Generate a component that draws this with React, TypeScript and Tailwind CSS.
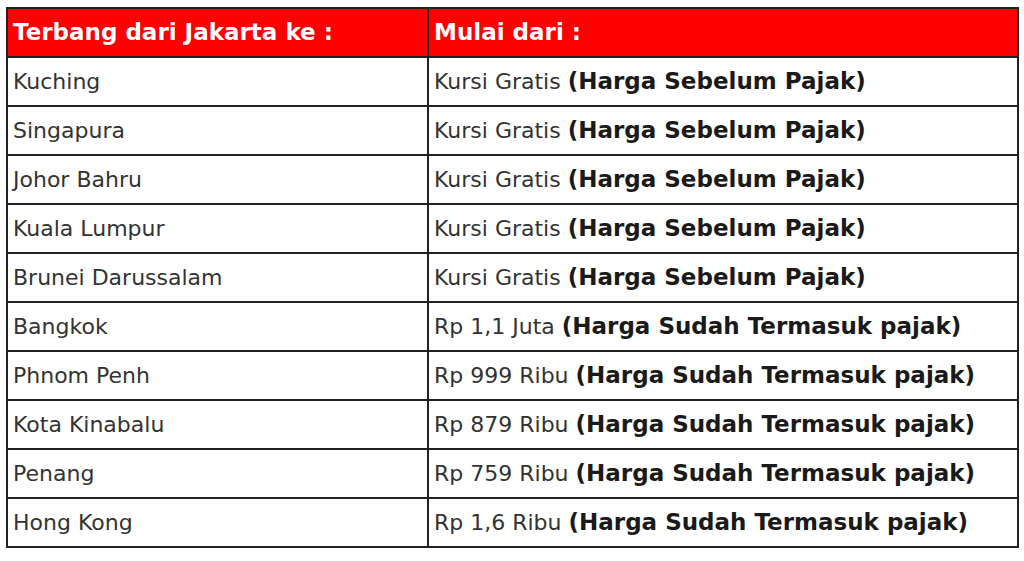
import React from 'react';

const rows: [string, string, string][] = [
  ['Kuching', 'Kursi Gratis', '(Harga Sebelum Pajak)'],
  ['Singapura', 'Kursi Gratis', '(Harga Sebelum Pajak)'],
  ['Johor Bahru', 'Kursi Gratis', '(Harga Sebelum Pajak)'],
  ['Kuala Lumpur', 'Kursi Gratis', '(Harga Sebelum Pajak)'],
  ['Brunei Darussalam', 'Kursi Gratis', '(Harga Sebelum Pajak)'],
  ['Bangkok', 'Rp 1,1 Juta', '(Harga Sudah Termasuk pajak)'],
  ['Phnom Penh', 'Rp 999 Ribu', '(Harga Sudah Termasuk pajak)'],
  ['Kota Kinabalu', 'Rp 879 Ribu', '(Harga Sudah Termasuk pajak)'],
  ['Penang', 'Rp 759 Ribu', '(Harga Sudah Termasuk pajak)'],
  ['Hong Kong', 'Rp 1,6 Ribu', '(Harga Sudah Termasuk pajak)'],
];

const App = () => {
  return (
    <div className="min-h-screen bg-white pt-[7px] pl-[6px] font-['DejaVu_Sans',sans-serif]">
      <table className="w-[1013px] border-collapse border-2 border-[#222]">
        <thead>
          <tr className="h-[49px] bg-[#ff0000] text-white text-[23px] font-bold">
            <th className="w-[421px] border-2 border-[#222] pl-[5px] text-left">Terbang dari Jakarta ke :</th>
            <th className="border-2 border-[#222] pl-[5px] text-left">Mulai dari :</th>
          </tr>
        </thead>
        <tbody>
          {rows.map(([city, price, note]) => (
            <tr key={city} className="h-[49px] text-[22px] text-[#333]">
              <td className="border-2 border-[#222] pl-[5px]">{city}</td>
              <td className="border-2 border-[#222] pl-[5px] whitespace-nowrap">
                {price} <span className="font-bold text-[23px] text-[#1a1a1a]">{note}</span>
              </td>
            </tr>
          ))}
        </tbody>
      </table>
    </div>
  );
};

export default App;
